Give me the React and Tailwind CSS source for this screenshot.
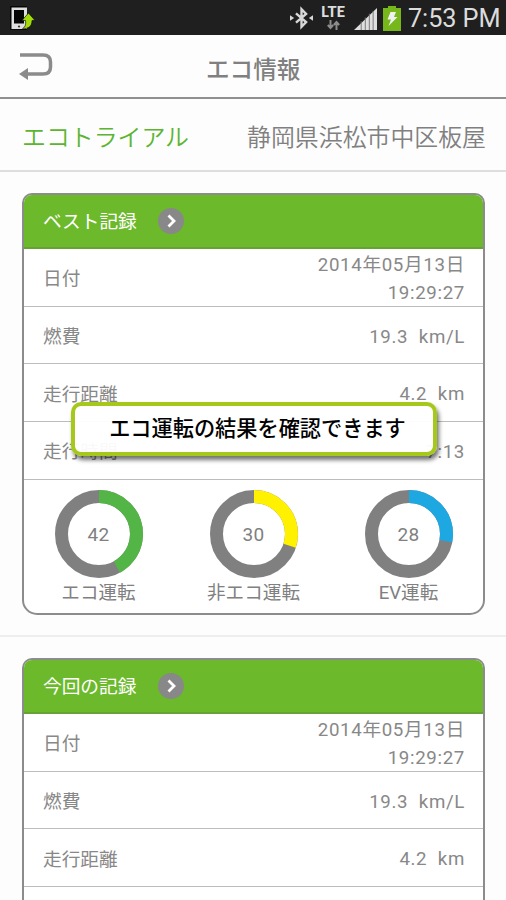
const jp = "font-['Roboto','Noto_Sans_CJK_JP',sans-serif]";

function StatusBar() {
  return (
    <div className="flex h-[35px] shrink-0 items-center bg-[#1f1f1f] text-[#dcdcdc]">
      <svg className="ml-[10px] h-7 w-[26px]" viewBox="0 0 26 28">
        <rect x="0" y="2" width="17" height="24" rx="1" fill="#050505" />
        <path fillRule="evenodd" fill="#dedede" d="M1.500 3.500H17V25H1.500Z M4 6V19.500H14V6Z" />
        <circle cx="9" cy="22.5" r="1.1" fill="#333" />
        <path d="M18.500 9L25 16.500H22C22 22 19 24.800 12.500 24.800C15.500 22.500 16 20.500 15.500 16.500H12Z" fill="#a3dc0a" stroke="#111" strokeWidth=".7" />
      </svg>
      <div className="grow" />
      <svg className="mr-[2px] h-7 w-[23px] shrink-0" viewBox="0 0 25 28" fill="none" stroke="#d8d8d8" strokeWidth="2.600">
        <path d="M6.500 9L17.500 18.500L12.500 23.500V4.500L17.500 9.500L6.500 19" />
        <path d="M0 11L4.500 14L0 17Z M25 11L20.500 14L25 17Z" fill="#d8d8d8" stroke="none" />
      </svg>
      <div className="ml-[4px] flex w-[28px] shrink-0 flex-col items-center">
        <span className="font-['Lato',sans-serif] text-[15px] leading-[13px] font-black">LTE</span>
        <svg className="mt-[2px] h-[10px] w-[13px]" viewBox="0 0 13 10" fill="none" stroke="#8c8c8c" strokeWidth="2">
          <path d="M3.500 0V8M.8 5L3.500 8L6.200 5M9.500 10V2M6.800 5L9.500 2L12.200 5" />
        </svg>
      </div>
      <svg className="mt-[3px] ml-[7px] h-[22px] w-[23px] shrink-0" viewBox="0 0 24 23">
        <path d="M0 23L24 0V23Z" fill="#dedede" />
        <path d="M7.500 14V23M11.800 10V23M16 6V23M20 3V23" stroke="#777" strokeWidth="1" />
      </svg>
      <svg className="mt-px ml-[6px] h-[25px] w-[18px] shrink-0" viewBox="0 0 18 25">
        <path d="M0 2H5V0H13V2H18V25H0Z" fill="#76b81b" />
        <path d="M7.500 6H13L11 11H14.500L5.500 20L8 13.500H4.500Z" fill="#f1f1f1" />
      </svg>
      <span className="mr-[6px] ml-[7px] w-[92px] shrink-0 pt-[2px] text-[25.300px] leading-[35px] tracking-[-.1px] whitespace-nowrap">7:53 PM</span>
    </div>
  );
}

function Row({ label, children }) {
  return (
    <div className="flex h-[57.700px] shrink-0 items-center justify-between border-b-[1.500px] border-[#bcbcbc] pr-[18px] pl-[19px] text-[18.700px] text-[#888]">
      <span className="pt-[4px]">{label}</span>
      <span className="pt-[3px] text-right leading-[28px] tracking-[.65px] whitespace-pre">{children}</span>
    </div>
  );
}

function Donut({ value, color, label }) {
  const c = 2 * Math.PI * 37.5;
  return (
    <div className="flex w-[155px] shrink-0 flex-col items-center">
      <div className="grid size-[88px] place-items-center">
        <svg className="col-start-1 row-start-1 size-[88px] -rotate-90" viewBox="0 0 88 88" fill="none" strokeWidth="13">
          <circle cx="44" cy="44" r="37.5" stroke="#808080" />
          <circle cx="44" cy="44" r="37.5" stroke={color} strokeDasharray={`${(c * value) / 100} ${c}`} />
        </svg>
        <span className="col-start-1 row-start-1 mt-[3px] text-[19px] tracking-[.3px]">{value}</span>
      </div>
      <span className="mt-[3px] text-[18.600px] leading-[24px]">{label}</span>
    </div>
  );
}

function CardFrame({ title, open, children }) {
  return (
    <section
      className={`ml-[22px] flex w-[463px] shrink-0 flex-col overflow-hidden border-2 border-[#8c8c8c] bg-white ${
        open ? "h-[242px] rounded-t-[10px] border-b-0" : "h-[422px] rounded-t-[10px] rounded-b-[15px]"
      }`}
    >
      <h2 className="flex h-[54px] shrink-0 items-center border-b-2 border-[#66a334] bg-[#6cb92b] pl-[19px] text-[18.700px] text-white">
        <span className="w-[115px] pt-[3px]">{title}</span>
        <svg className="size-[26px]" viewBox="0 0 26 26">
          <circle cx="13" cy="13" r="13" fill="#888" />
          <path d="M10.500 7.500L16 13L10.500 18.500" fill="none" stroke="#fff" strokeWidth="2.800" />
        </svg>
      </h2>
      <Row label="日付">{"2014年05月13日\n19:29:27"}</Row>
      <Row label="燃費">19.3  km/L</Row>
      <Row label="走行距離">4.2  km</Row>
      {children}
    </section>
  );
}

export default function App() {
  return (
    <main className={`relative flex h-[900px] w-[506px] flex-col overflow-hidden bg-[#fdfdfd] ${jp}`}>
      <StatusBar />
      <header className="flex h-[64px] shrink-0 items-center border-b-2 border-[#909090]">
        <svg className="mt-[2px] ml-[19px] h-[28px] w-[34px]" viewBox="0 0 34 28">
          <path d="M1 2H24Q31.500 2 31.500 9V14Q31.500 21 24 21H8" fill="none" stroke="#8b8b8b" strokeWidth="3.500" />
          <path d="M0 21L9 15V27Z" fill="#8b8b8b" />
        </svg>
        <h1 className="ml-[153px] pt-[9px] text-[23.600px] font-medium text-[#808080]">エコ情報</h1>
      </header>
      <div className="flex h-[73px] shrink-0 items-center justify-between border-b-2 border-[#dedede] pt-[8px] pr-[20px] pl-[22px] text-[23.900px] font-[350]">
        <span className="text-[#5bb531]">エコトライアル</span>
        <span className="text-[#808080]">静岡県浜松市中区板屋</span>
      </div>
      <div className="flex h-[465px] shrink-0 items-start border-b-2 border-[#eee] pt-[21px]">
        <CardFrame title="ベスト記録">
          <Row label="走行時間">7:13</Row>
          <div className="flex justify-center pt-[10px] text-[#808080]">
            <Donut value={42} color="#52b545" label="エコ運転" />
            <Donut value={30} color="#fff100" label="非エコ運転" />
            <Donut value={28} color="#1da8e2" label="EV運転" />
          </div>
        </CardFrame>
      </div>
      <div className="flex shrink-0 pt-[21px]">
        <CardFrame title="今回の記録" open />
      </div>
      <div className="absolute top-[402px] left-[71px] flex h-[54px] w-[366px] items-center justify-center rounded-[10px] border-[4.500px] border-[#a5c81b] bg-white/95 pl-[7px] text-[21.200px] font-medium whitespace-nowrap text-black shadow-[2px_4px_4px_rgba(0,0,0,.55)]">
        エコ運転の結果を確認できます
      </div>
    </main>
  );
}
